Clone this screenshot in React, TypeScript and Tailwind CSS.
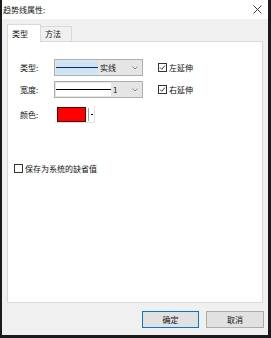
import React from "react";

const font = { fontFamily: '"Noto Sans CJK SC", "Noto Sans", sans-serif' };

function Chevron() {
  return (
    <svg width="6" height="4" viewBox="0 0 6 4" className="ml-auto mr-[4px]">
      <path d="M0.5 0.5 L3 3 L5.5 0.5" fill="none" stroke="#707070" strokeWidth="0.8" />
    </svg>
  );
}

function Check({ checked }: { checked: boolean }) {
  return (
    <div className="w-[9px] h-[9px] border border-[#333] bg-white flex items-center justify-center">
      {checked && (
        <svg width="7" height="7" viewBox="0 0 7 7">
          <path d="M1 3.5 L2.8 5.3 L6 1.5" fill="none" stroke="#222" strokeWidth="0.9" />
        </svg>
      )}
    </div>
  );
}

export default function App() {
  return (
    <div className="w-[271px] h-[338px] bg-[#1b1b1b] overflow-hidden pl-[2px]" style={font}>
      <div className="w-[266px] h-[335px] bg-[#f0f0f0] flex flex-col text-[8px] text-[#111] leading-none">
        {/* title bar */}
        <div className="h-[19px] bg-white flex items-center pl-[1px]">
          <span>趋势线属性:</span>
          <svg width="9" height="9" viewBox="0 0 9 9" className="ml-auto mr-[6px]">
            <path d="M0.5 0.5 L8.5 8.5 M8.5 0.5 L0.5 8.5" stroke="#222" strokeWidth="0.9" />
          </svg>
        </div>

        <div className="px-[5px] pt-[4px]">
          {/* tabs */}
          <div className="flex items-end h-[18px]">
            <div className="w-[34px] h-[18px] bg-white border border-b-0 border-[#d9d9d9] flex items-center pl-[4px] relative z-10 -mb-[1px]">
              类型
            </div>
            <div className="w-[31px] h-[15px] border border-l-0 border-b-0 border-[#d9d9d9] flex items-center pl-[4px]">
              方法
            </div>
          </div>

          {/* panel */}
          <div className="h-[262px] bg-white border border-[#d9d9d9] pt-[17px] pl-[12px]">
            <div className="flex items-center h-[17px]">
              <span className="w-[34px]">类型:</span>
              <div className="w-[89px] h-[17px] border border-[#adadad] bg-[#e5e5e5] flex items-center pl-[1px]">
                <div className="w-[42px] h-[13px] bg-[#cce4f7] flex items-center">
                  <div className="w-full h-[1px] bg-[#1a2a4a]" />
                </div>
                <span className="ml-[2px]">实线</span>
                <Chevron />
              </div>
              <div className="ml-[15px] flex items-center gap-[2px]">
                <Check checked />
                <span>左延伸</span>
              </div>
            </div>

            <div className="flex items-center h-[17px] mt-[5px]">
              <span className="w-[34px]">宽度:</span>
              <div className="w-[89px] h-[17px] border border-[#adadad] bg-[#e5e5e5] flex items-center pl-[1px]">
                <div className="w-[55px] h-[13px] bg-white flex items-center">
                  <div className="w-full h-[1px] bg-black" />
                </div>
                <span className="ml-[2px]">1</span>
                <Chevron />
              </div>
              <div className="ml-[15px] flex items-center gap-[2px]">
                <Check checked />
                <span>右延伸</span>
              </div>
            </div>

            <div className="flex items-center h-[17px] mt-[8px]">
              <span className="w-[35px]">颜色:</span>
              <div className="h-[17px] bg-white flex items-center border-b border-r border-[#e0e0e0]">
                <div className="w-[29px] h-[15px] bg-[#ff0000] border border-[#5a0000] ml-[2px]" />
                <div className="w-[1px] h-[13px] bg-[#a0a0a0] ml-[2px]" />
                <div className="w-[5px] flex items-center justify-center">
                  <div className="w-[2px] h-[1px] bg-black" />
                </div>
              </div>
            </div>

            <div className="flex items-center mt-[41px] -ml-[6px] gap-[2px]">
              <Check checked={false} />
              <span>保存为系统的缺省值</span>
            </div>
          </div>

          {/* buttons */}
          <div className="flex justify-end gap-[7px] mt-[8px] pr-[0px] -mr-[1px]">
            <button className="w-[57px] h-[17px] bg-[#e1e1e1] border border-[#0078d7] text-[8px] leading-none">
              确定
            </button>
            <button className="w-[58px] h-[17px] bg-[#e1e1e1] border border-[#adadad] text-[8px] leading-none">
              取消
            </button>
          </div>
        </div>
      </div>
    </div>
  );
}
